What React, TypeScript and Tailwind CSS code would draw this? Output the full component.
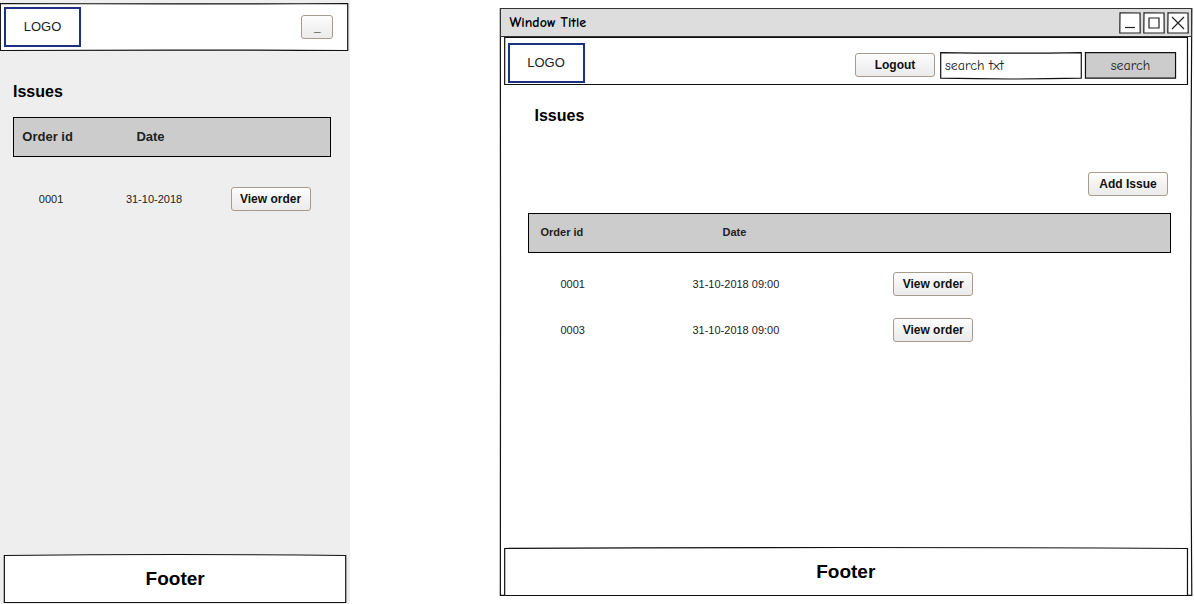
import React from "react";

const HAND = "font-['Comic_Sans_MS','Comic_Neue','Open_Sans',sans-serif]";

/** Outline with slightly bowed edges, stretched behind its parent's content. */
function SketchOutline({ d, fill = "#fff" }: { d: string; fill?: string }) {
  return (
    <svg
      aria-hidden="true"
      className="pointer-events-none absolute inset-0 -z-10 h-full w-full overflow-visible"
      viewBox="0 0 100 100"
      preserveAspectRatio="none"
    >
      <path d={d} fill={fill} stroke="#111" strokeWidth="1.2" vectorEffect="non-scaling-stroke" />
    </svg>
  );
}

const BAR_PATH = "M0.1 1 Q50 3 99.85 1 L99.85 99 Q50 97 0.1 99 Z";
const FOOT_PATH = "M0.1 1 Q50 -3 99.85 1 L99.85 99 Q50 97.5 0.1 99 Z";
const FIELD_PATH = "M0.5 2 Q50 6 99.5 2 L99.5 97 Q50 103 0.5 97 Z";
const BOX_PATH = "M0.5 2 L99.5 2 L99.5 97 L0.5 97 Z";
const WINDOW_PATH = "M0.05 0.1 Q50 -0.05 99.9 0.1 Q99.6 50 99.9 99.9 L0.05 99.9 Q0.1 50 0.05 0.1 Z";

function PushButton({ children, size = "w-20" }: { children: React.ReactNode; size?: string }) {
  return (
    <button
      type="button"
      className={`${size} h-6 shrink-0 rounded-[3px] border border-[#a89a8c] bg-linear-to-b from-[#fdfdfd] via-[#f3f3f3] to-[#ebebeb] text-xs font-bold leading-[22px] text-[#111]`}
    >
      {children}
    </button>
  );
}

function Logo() {
  return (
    <a
      href="#"
      className="flex h-10 w-[77px] shrink-0 items-center justify-center border-2 border-[#1b3281] bg-white text-[13px] leading-4 text-[#222]"
    >
      LOGO
    </a>
  );
}

function Footer() {
  return (
    <footer className="relative isolate mx-1 mt-auto flex h-12 items-center justify-center text-[19px] font-bold leading-6">
      <SketchOutline d={FOOT_PATH} />
      Footer
    </footer>
  );
}

function MobileScreen() {
  return (
    <section className="flex min-h-screen flex-col bg-[#eee] pt-[3px] pb-px">
      <header className="relative isolate mr-0.5 flex h-12 items-center justify-between pr-[15px] pl-1">
        <SketchOutline d={BAR_PATH} />
        <Logo />
        <PushButton size="w-8">_</PushButton>
      </header>
      <main className="pr-[19px] pl-[13px]">
        <h1 className="mt-[29px] text-base font-bold leading-6">Issues</h1>
        <table className="mt-[13px] w-full table-fixed border-separate border-spacing-0">
          <thead>
            <tr className="text-[13px] leading-4 text-[#222] *:h-10 *:border-y *:border-black *:bg-[#ccc] *:pr-[5px]">
              <th className="w-[23%] border-l">Order id</th>
              <th className="w-[42%]">Date</th>
              <th className="border-r" aria-label="Actions" />
            </tr>
          </thead>
          <tbody>
            <tr className="text-center text-[11px] leading-4 text-[#222] *:h-[84px]">
              <td className="pl-[3px]">0001</td>
              <td className="pl-0.5">31-10-2018</td>
              <td className="pr-2.5">
                <PushButton>View order</PushButton>
              </td>
            </tr>
          </tbody>
        </table>
      </main>
      <Footer />
    </section>
  );
}

function WindowControls() {
  const shapes = [
    { label: "Minimize", d: "M6 15.5H16" },
    { label: "Maximize", d: "M6 6H16V16H6Z" },
    { label: "Close", d: "M5 5L17 17M17 5L5 17" },
  ];
  return (
    <div className="flex gap-0.5">
      {shapes.map((s) => (
        <button key={s.label} type="button" aria-label={s.label} className="size-[22px]">
          <svg viewBox="0 0 22 22" className="size-full" fill="none" stroke="#222" strokeWidth="1.2">
            <path d="M1 0.8L21 1L21.2 21L0.8 21Z" fill="#fff" />
            <path d={s.d} />
          </svg>
        </button>
      ))}
    </div>
  );
}

const orders = [
  { id: "0001", date: "31-10-2018 09:00" },
  { id: "0003", date: "31-10-2018 09:00" },
];

function DesktopScreen() {
  return (
    <section className="min-h-screen pt-2 pr-0.5 pb-2">
      <div className="relative isolate flex min-h-[calc(100vh-16px)] flex-col">
        <SketchOutline d={WINDOW_PATH} />
        <div className="flex h-[29px] items-center justify-between border border-[#333] bg-[#ddd] pr-0.5 pl-[9px]">
          <span className={`${HAND} text-sm font-bold`}>Window Title</span>
          <WindowControls />
        </div>
        <header className="relative isolate mx-1 flex h-12 items-center pt-1 pr-3 pl-1">
          <SketchOutline d={BAR_PATH} />
          <Logo />
          <form className="ml-auto flex items-center gap-[3px] pt-1" onSubmit={(e) => e.preventDefault()}>
            <div className="mr-0.5 flex">
              <PushButton>Logout</PushButton>
            </div>
            <div className="relative isolate flex h-[27px] w-[142px]">
              <SketchOutline d={FIELD_PATH} />
              <input
                type="text"
                aria-label="Search"
                defaultValue="search txt"
                className={`${HAND} h-full w-full bg-transparent px-[5px] text-sm text-[#222] outline-none`}
              />
            </div>
            <button
              type="submit"
              className={`${HAND} relative isolate h-[27px] w-[91px] pt-0.5 text-sm text-[#222]`}
            >
              <SketchOutline d={BOX_PATH} fill="#ccc" />
              search
            </button>
          </form>
        </header>
        <main className="pr-[21px] pl-7">
          <h1 className="mt-[19px] pl-[7px] text-base font-bold leading-6">Issues</h1>
          <div className="mt-11 flex justify-end pr-[3px]">
            <PushButton>Add Issue</PushButton>
          </div>
          <table className="mt-[17px] w-full table-fixed border-separate border-spacing-0">
            <thead>
              <tr className="text-[11px] leading-4 text-[#222] *:h-10 *:border-y *:border-black *:bg-[#ccc] *:pb-0.5">
                <th className="w-[14%] border-l pl-3 text-left">Order id</th>
                <th className="w-[36%] pl-0.5">Date</th>
                <th className="border-r" aria-label="Actions" />
              </tr>
            </thead>
            <tbody className="before:block before:h-2">
              {orders.map((order) => (
                <tr key={order.id} className="text-[11px] leading-4 text-[#222] *:h-[46px]">
                  <td className="pl-[33px]">{order.id}</td>
                  <td className="pl-[5px] text-center">{order.date}</td>
                  <td className="pl-11">
                    <PushButton>View order</PushButton>
                  </td>
                </tr>
              ))}
            </tbody>
          </table>
        </main>
        <Footer />
      </div>
    </section>
  );
}

export default function App() {
  return (
    <div className="grid min-h-screen grid-cols-[350fr_694fr] gap-[12.5%] bg-white font-['Liberation_Sans',Arial,sans-serif] text-black">
      <MobileScreen />
      <DesktopScreen />
    </div>
  );
}
